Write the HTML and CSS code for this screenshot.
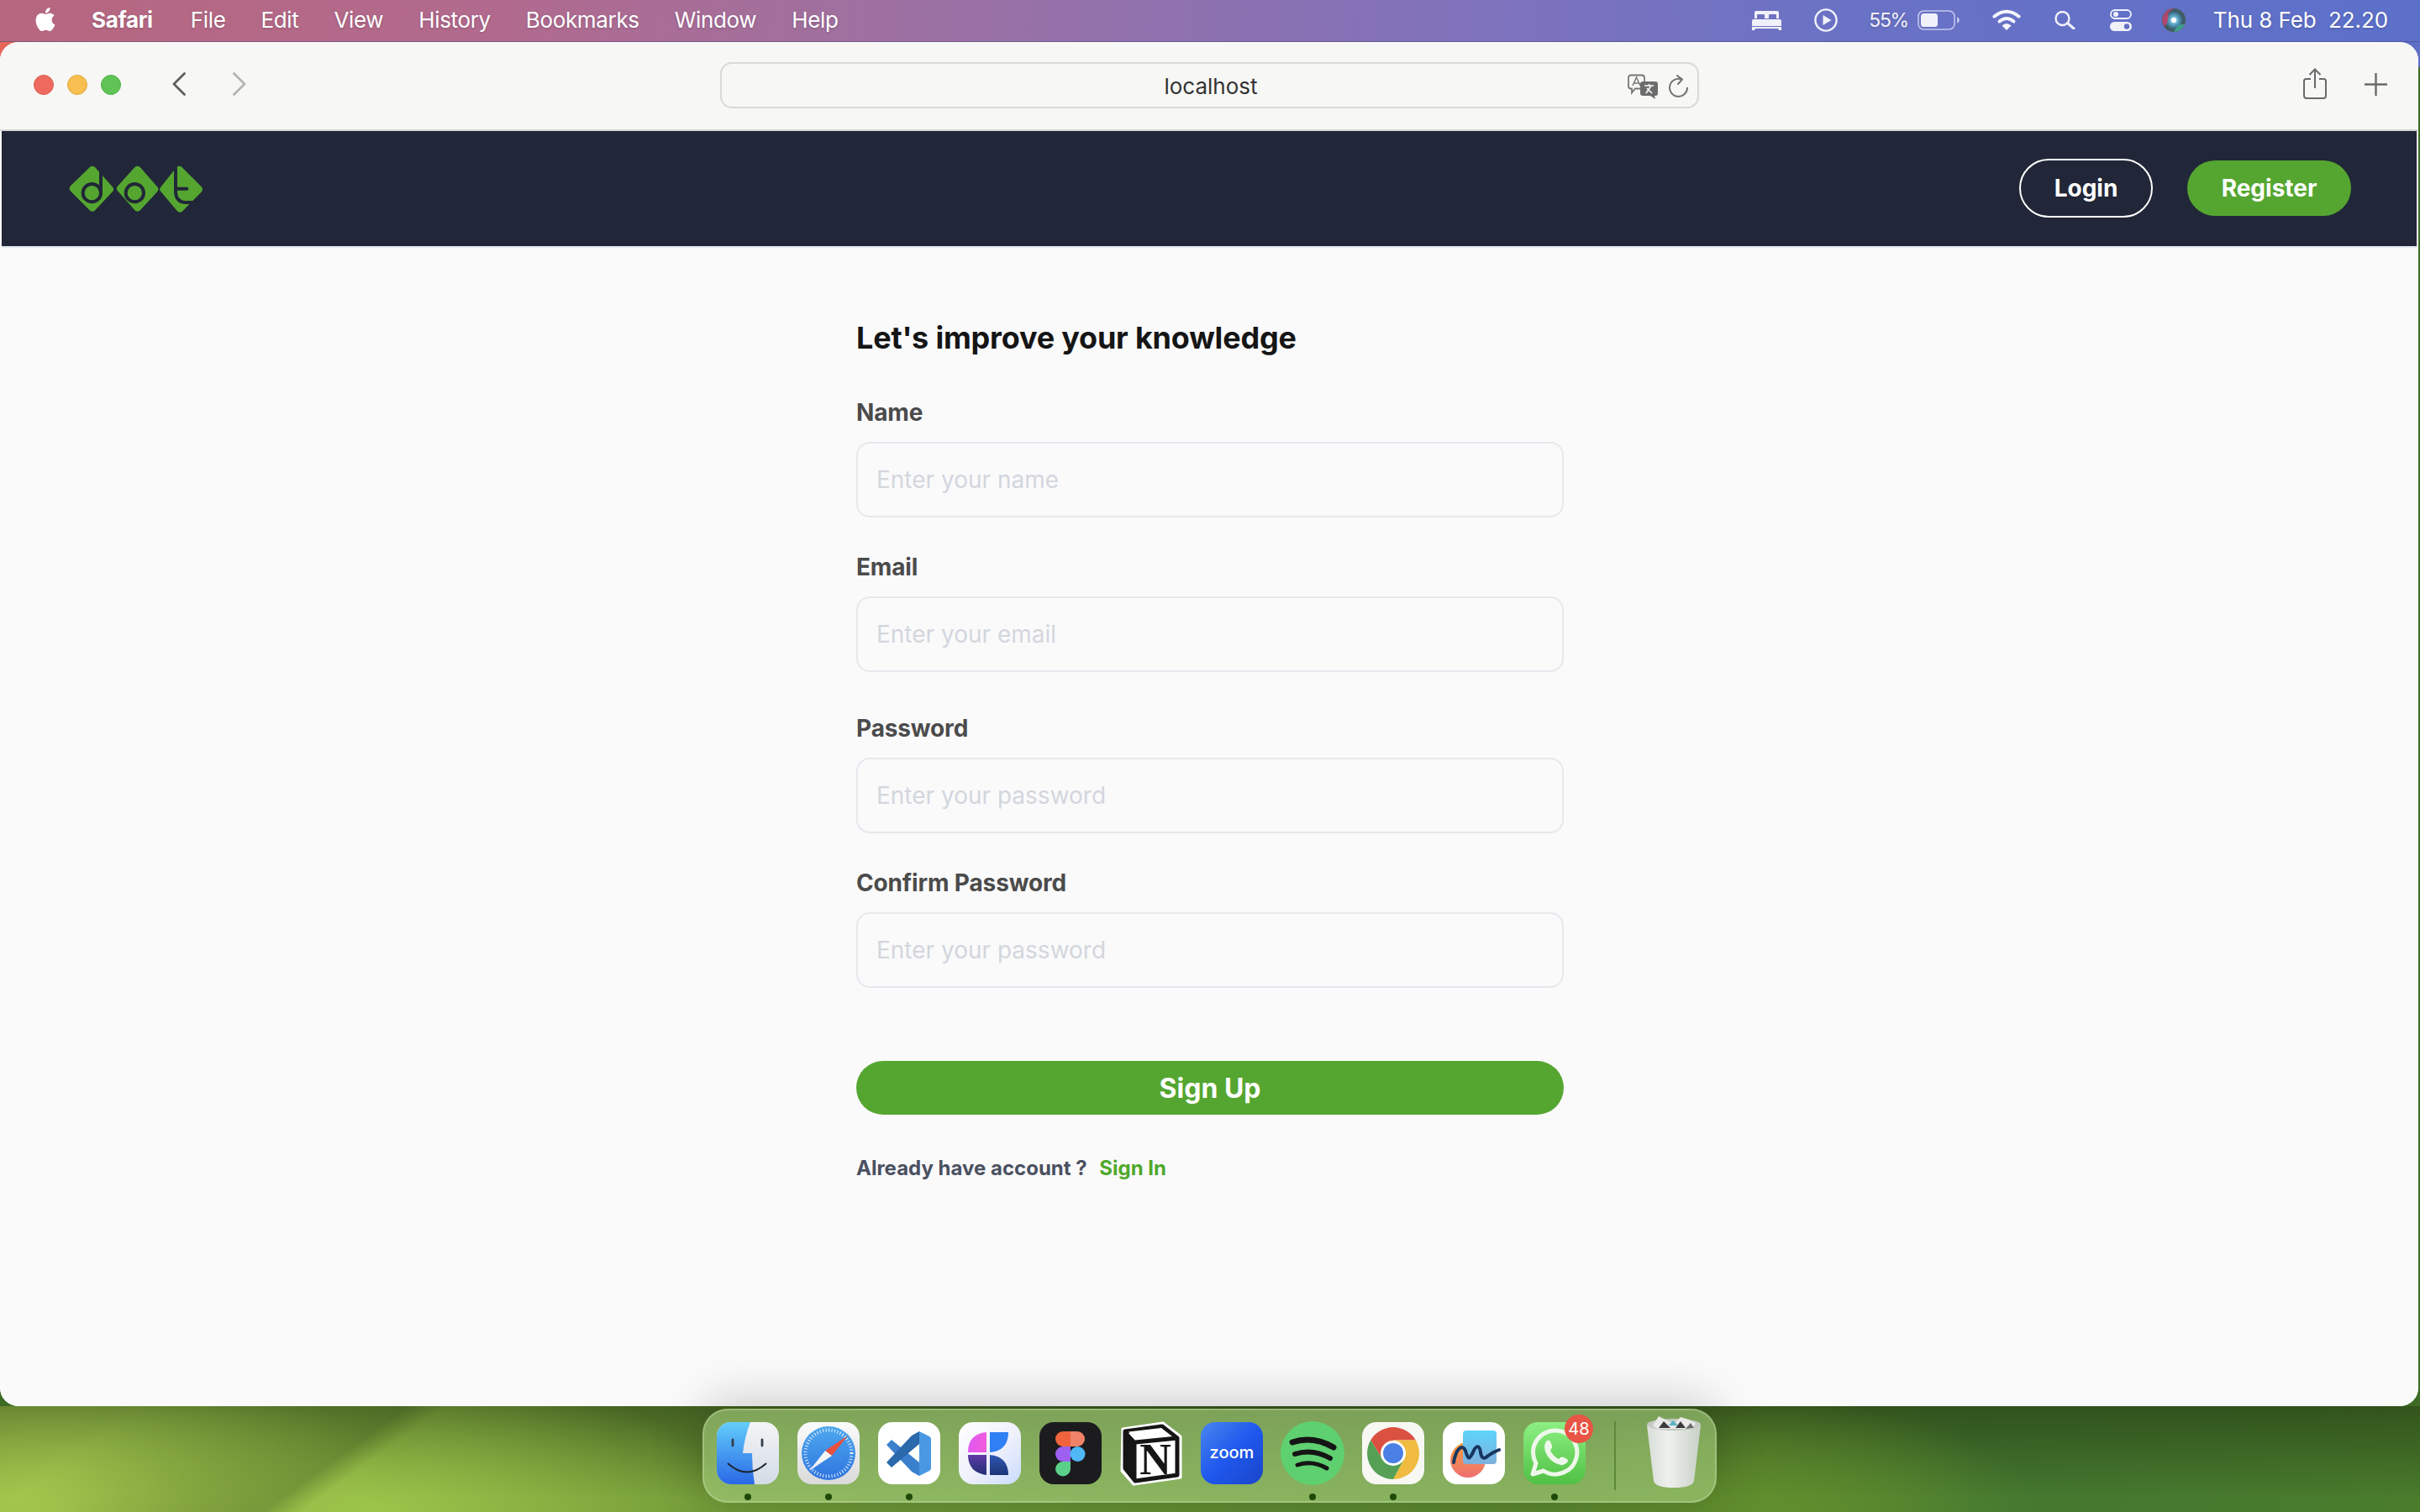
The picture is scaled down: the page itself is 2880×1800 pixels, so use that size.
FILE: index.html
```html
<!DOCTYPE html>
<html lang="en">
<head>
<meta charset="utf-8">
<title>localhost</title>
<link rel="stylesheet" href="styles.css">
</head>
<body>
<div class="desktop">
  <header class="menubar">
    <nav class="menus">
      <svg class="apple" viewBox="0 0 24 24"><path fill="#fff" d="M12.152 6.896c-.948 0-2.415-1.078-3.96-1.04-2.04.027-3.91 1.183-4.961 3.014-2.117 3.675-.546 9.103 1.519 12.09 1.013 1.454 2.208 3.09 3.792 3.039 1.52-.065 2.09-.987 3.935-.987 1.831 0 2.35.987 3.96.948 1.637-.026 2.676-1.48 3.676-2.948 1.156-1.688 1.636-3.325 1.662-3.415-.039-.013-3.182-1.221-3.22-4.857-.026-3.04 2.48-4.494 2.597-4.559-1.429-2.09-3.623-2.324-4.39-2.376-2-.156-3.675 1.09-4.61 1.09zM15.53 3.83c.843-1.012 1.4-2.427 1.245-3.83-1.207.052-2.662.805-3.532 1.818-.78.896-1.454 2.338-1.273 3.714 1.338.104 2.715-.688 3.559-1.701"/></svg>
      <span class="menu-app">Safari</span>
      <span>File</span>
      <span>Edit</span>
      <span>View</span>
      <span>History</span>
      <span>Bookmarks</span>
      <span>Window</span>
      <span>Help</span>
    </nav>
    <div class="tray">
      <svg class="tray-bed" viewBox="0 0 35 24"><path fill="#f1f1fa" d="M5 1h25q2 0 2 2v7h-3V6q0-1-1-1h-7q-1 0-1 1v4h-5V6q0-1-1-1H7Q6 5 6 6v4H3V3q0-2 2-2zM2 11h31q2 0 2 2v6H0v-6q0-2 2-2zM0 20h35v4h-3l-1-2H4l-1 2H0z"/></svg>
      <svg class="tray-play" viewBox="0 0 28 28"><circle cx="14" cy="14" r="12.6" fill="none" stroke="#f1f1fa" stroke-width="2.4"/><path fill="#f1f1fa" d="M10.5 8l10 6-10 6z"/></svg>
      <div class="tray-battery">
        <span class="battery-pct">55%</span>
        <svg class="battery" viewBox="0 0 50 24"><rect x="1" y="1" width="43" height="22" rx="6.5" fill="none" stroke="#c3c6ea" stroke-width="1.6"/><rect x="4" y="4" width="20" height="16" rx="3.5" fill="#f1f1fa"/><path fill="#c3c6ea" d="M47 8q3 1.500 3 4t-3 4z"/></svg>
      </div>
      <svg class="tray-wifi" viewBox="0 0 34 25"><g fill="none" stroke="#f6f6fc" stroke-width="4" stroke-linecap="round"><path d="M2.500 8.500Q17-3 31.500 8.500"/><path d="M8.500 14.500Q17 7.500 25.500 14.500"/></g><path fill="#f6f6fc" d="M11.500 19.500Q17 14.500 22.500 19.500L17 25z"/></svg>
      <svg class="tray-search" viewBox="0 0 25 22"><circle cx="9.500" cy="9" r="8" fill="none" stroke="#f1f1fa" stroke-width="2.400"/><path d="M15.500 14.500L23 21" stroke="#f1f1fa" stroke-width="3" stroke-linecap="round"/></svg>
      <svg class="tray-control" viewBox="0 0 26 26"><rect x="1" y="1" width="24" height="10" rx="5" fill="none" stroke="#f1f1fa" stroke-width="1.800"/><circle cx="7" cy="6" r="3" fill="#f1f1fa"/><rect y="15" width="26" height="11" rx="5.500" fill="#f1f1fa"/><circle cx="20" cy="20.500" r="3.200" fill="#6470c4"/></svg>
      <svg class="tray-siri" viewBox="0 0 28 28"><defs><radialGradient id="siriG" cx="50%" cy="50%" r="55%"><stop offset="0" stop-color="#f2f2f2"/><stop offset=".35" stop-color="#55a6c8"/><stop offset=".7" stop-color="#3c5a6c"/><stop offset="1" stop-color="#47614f"/></radialGradient></defs><circle cx="14" cy="14" r="14" fill="url(#siriG)"/><path fill="#c6426e" opacity=".85" d="M14 0A14 14 0 0 0 3 22Q9 14 7 6q3-4 7-6z"/><path fill="#3eb99a" opacity=".7" d="M14 28A14 14 0 0 0 27 19Q19 17 14 28z"/><circle cx="14" cy="14" r="3" fill="#fff"/></svg>
      <span class="clock">Thu 8 Feb&nbsp; 22.20</span>
    </div>
  </header>

  <section class="window">
    <div class="toolbar">
      <div class="lights">
        <span class="light light-red"></span>
        <span class="light light-yellow"></span>
        <span class="light light-green"></span>
      </div>
      <svg class="chevron" viewBox="0 0 16 28"><path d="M14.500 1.500L2 14l12.500 12.500" fill="none" stroke="#5e5e5e" stroke-width="2.800" stroke-linecap="round" stroke-linejoin="round"/></svg>
      <svg class="chevron chevron-next" viewBox="0 0 16 28"><path d="M1.500 1.500L14 14 1.500 26.500" fill="none" stroke="#b4b4b4" stroke-width="2.800" stroke-linecap="round" stroke-linejoin="round"/></svg>
      <div class="urlbar">
        <span class="url-text">localhost</span>
        <svg class="translate" viewBox="0 0 38 30"><path d="M5 1.500h13q3 0 3 3v10q0 3-3 3H10l-4 5v-5H5q-3 0-3-3v-10q0-3 3-3z" fill="#f7f7f5" stroke="#777" stroke-width="1.800"/><path d="M7 14L11.500 4l4.500 10M8.500 11h6" fill="none" stroke="#777" stroke-width="1.500"/><path d="M19 9h15q3 0 3 3v11q0 3-3 3h-1l1 4-6-4h-9q-3 0-3-3V12q0-3 3-3z" fill="#6c6c6c"/><path d="M21 14h11M26.500 12v2M23 23l6-9M24 17l6 6" stroke="#f7f7f5" stroke-width="1.700" fill="none"/></svg>
        <svg class="reload" viewBox="0 0 24 28"><path d="M15 5.500A10.500 10.500 0 1 0 22 15" fill="none" stroke="#737373" stroke-width="2"/><path d="M10 1l6 4.500-5 5.500" fill="none" stroke="#737373" stroke-width="2" stroke-linejoin="round" stroke-linecap="round"/></svg>
      </div>
      <div class="tool-actions">
        <svg class="share" viewBox="0 0 28 37"><path d="M9 13H3.500Q1 13 1 15.500v17Q1 36 4 36h20q3 0 3-3.500v-17Q27 13 24.500 13H19" fill="none" stroke="#6a6a6a" stroke-width="2"/><path d="M14 24V2M7.500 8L14 1.500 20.500 8" fill="none" stroke="#6a6a6a" stroke-width="2"/></svg>
        <svg class="plus" viewBox="0 0 27 27"><path d="M13.500 0v27M0 13.500h27" stroke="#6a6a6a" stroke-width="2.400"/></svg>
      </div>
    </div>

    <div class="page">
      <nav class="site-nav">
        <svg class="logo" viewBox="66 80 477 168">
          <g fill="#55a630" stroke="#55a630" stroke-width="26" stroke-linejoin="round">
            <path d="M150 95L81 162 150 231 212 165z"/>
            <path d="M311 95L250 162 311 231 372 165z"/>
            <path d="M460 95L404 165 462 234 530 165z"/>
          </g>
          <g fill="none" stroke="#212738" stroke-width="12" stroke-linecap="round">
            <circle cx="148" cy="178" r="32"/>
            <path d="M180 178V92"/>
            <circle cx="301" cy="178" r="32"/>
            <path d="M447 82V172q0 40 40 40h25M447 163h40"/>
          </g>
        </svg>
        <div class="nav-actions">
          <a class="btn-login">Login</a>
          <a class="btn-register">Register</a>
        </div>
      </nav>
      <main class="content">
        <form class="signup">
          <h1 class="title">Let's improve your knowledge</h1>
          <div class="field">
            <label class="field-label">Name</label>
            <input class="field-input" type="text" placeholder="Enter your name">
          </div>
          <div class="field">
            <label class="field-label">Email</label>
            <input class="field-input" type="text" placeholder="Enter your email">
          </div>
          <div class="field field-wide">
            <label class="field-label">Password</label>
            <input class="field-input" type="text" placeholder="Enter your password">
          </div>
          <div class="field">
            <label class="field-label">Confirm Password</label>
            <input class="field-input" type="text" placeholder="Enter your password">
          </div>
          <button class="submit" type="button">Sign Up</button>
          <p class="switch">Already have account ? <a class="switch-link">Sign In</a></p>
        </form>
      </main>
    </div>
  </section>

  <footer class="dock-row">
    <div class="dock">
      <div class="dock-item">
        <svg class="dock-icon" viewBox="0 0 74 74">
          <defs>
            <linearGradient id="finderL" x1="0" y1="0" x2="0" y2="1"><stop offset="0" stop-color="#62cdfb"/><stop offset="1" stop-color="#2a68e6"/></linearGradient>
            <linearGradient id="finderR" x1="0" y1="0" x2="0" y2="1"><stop offset="0" stop-color="#f4f5f6"/><stop offset="1" stop-color="#d3dbe7"/></linearGradient>
            <clipPath id="finderClip"><rect width="74" height="74" rx="17"/></clipPath>
          </defs>
          <g clip-path="url(#finderClip)">
            <rect width="74" height="74" fill="url(#finderR)"/>
            <path d="M0 0H40Q33 18 31 37H42Q42 56 45 74H0z" fill="url(#finderL)"/>
          </g>
          <path d="M19 21v7M54 21v7" stroke="#333c4a" stroke-width="2.800" stroke-linecap="round"/>
          <path d="M13 49Q36 70 59 49" fill="none" stroke="#1d2530" stroke-width="2"/>
        </svg>
        <span class="dock-dot"></span>
      </div>
      <div class="dock-item">
        <svg class="dock-icon" viewBox="0 0 74 74">
          <defs>
            <linearGradient id="safBg" x1="0" y1="0" x2="0" y2="1"><stop offset="0" stop-color="#fbfbfb"/><stop offset="1" stop-color="#dadada"/></linearGradient>
            <linearGradient id="safDial" x1="0" y1="0" x2="0" y2="1"><stop offset="0" stop-color="#4da8ee"/><stop offset="1" stop-color="#2f74e0"/></linearGradient>
          </defs>
          <rect width="74" height="74" rx="17" fill="url(#safBg)"/>
          <circle cx="37" cy="37" r="32" fill="url(#safDial)"/>
          <circle cx="37" cy="37" r="27.500" fill="none" stroke="#e7f2fc" stroke-width="4" stroke-dasharray="1 2.500"/>
          <path d="M60 16L41 40 33 34z" fill="#e8503f"/>
          <path d="M14 58L33 34 41 40z" fill="#f4f4f4"/>
        </svg>
        <span class="dock-dot"></span>
      </div>
      <div class="dock-item">
        <svg class="dock-icon" viewBox="0 0 74 74">
          <rect width="74" height="74" rx="17" fill="#fff"/>
          <path d="M10 27L16 21 49 48V64L40 59z" fill="#3a80cd"/>
          <path d="M10 48L40 16 49 11V26L16 54z" fill="#2a69ab"/>
          <path d="M49 11L61 17Q63 18 63 20V55Q63 57 61 58L49 64z" fill="#4a98e4"/>
        </svg>
        <span class="dock-dot"></span>
      </div>
      <div class="dock-item">
        <svg class="dock-icon" viewBox="0 0 74 74">
          <defs>
            <linearGradient id="craftBg" x1="0" y1="0" x2="1" y2="1"><stop offset="0" stop-color="#ffffff"/><stop offset=".55" stop-color="#eef0fb"/><stop offset="1" stop-color="#c9dcff"/></linearGradient>
            <linearGradient id="craftA" x1="0" y1="0" x2="1" y2="0"><stop offset="0" stop-color="#e158f2"/><stop offset="1" stop-color="#f05cdc"/></linearGradient>
            <linearGradient id="craftB" x1="0" y1="0" x2="0" y2="1"><stop offset="0" stop-color="#5f3ba6"/><stop offset="1" stop-color="#232f75"/></linearGradient>
            <linearGradient id="craftC" x1="0" y1="0" x2="0" y2="1"><stop offset="0" stop-color="#2f58b4"/><stop offset="1" stop-color="#1d3476"/></linearGradient>
          </defs>
          <rect width="74" height="74" rx="17" fill="url(#craftBg)"/>
          <path d="M33 12Q11 14 11 36H33z" fill="url(#craftA)"/>
          <path d="M37 12H59Q59 34 37 36z" fill="#2f7ff5"/>
          <path d="M11 39H33V63Q11 60 11 39z" fill="url(#craftB)"/>
          <path d="M37 39Q59 41 59 63H37z" fill="url(#craftC)"/>
        </svg>
      </div>
      <div class="dock-item">
        <svg class="dock-icon" viewBox="0 0 74 74">
          <rect width="74" height="74" rx="17" fill="#1c1c1f"/>
          <path d="M19 20A9 9 0 0 1 28 11H37V29H28A9 9 0 0 1 19 20z" fill="#f0633d"/>
          <path d="M37 11H45A9 9 0 0 1 45 29H37z" fill="#f0826a"/>
          <path d="M19 38A9 9 0 0 1 28 29H37V47H28A9 9 0 0 1 19 38z" fill="#9d5ff0"/>
          <circle cx="45.500" cy="38" r="9" fill="#4fb8f5"/>
          <path d="M19 55.500A9 9 0 0 1 28 47H37V55.500A9 9 0 0 1 19 55.500z" fill="#5ad08a"/>
        </svg>
      </div>
      <div class="dock-item">
        <svg class="dock-icon" viewBox="0 0 74 74">
          <path d="M3 8L51 1 72 17V66L16 74 2 58z" fill="#fff" stroke="#fff" stroke-width="3" stroke-linejoin="round"/>
          <path d="M6 11L50 5 68 19V63L18 70 6 55z" fill="#fff" stroke="#151515" stroke-width="5" stroke-linejoin="round"/>
          <path d="M6 11L18 24V70L6 55z" fill="#151515" stroke="#151515" stroke-width="3" stroke-linejoin="round"/>
          <path d="M10 11.500L49 7 62 17 21 21z" fill="#fff"/>
          <path d="M18 24L68 19" stroke="#151515" stroke-width="5"/>
          <text class="notion-n" x="42" y="62" text-anchor="middle">N</text>
        </svg>
      </div>
      <div class="dock-item">
        <svg class="dock-icon" viewBox="0 0 74 74">
          <defs><linearGradient id="zoomBg" x1="0" y1="0" x2="1" y2="1"><stop offset="0" stop-color="#4a86ef"/><stop offset=".5" stop-color="#1f58ee"/><stop offset="1" stop-color="#1a45c9"/></linearGradient></defs>
          <rect width="74" height="74" rx="17" fill="url(#zoomBg)"/>
          <text class="zoom-word" x="37" y="43" text-anchor="middle">zoom</text>
        </svg>
      </div>
      <div class="dock-item">
        <svg class="dock-icon dock-icon-spotify" viewBox="0 0 76 76">
          <circle cx="38" cy="38" r="38" fill="#5fd070"/>
          <g fill="none" stroke="#151515" stroke-linecap="round">
            <path d="M14 25Q38 17 63 31" stroke-width="7"/>
            <path d="M17 39Q38 32 59 44" stroke-width="6"/>
            <path d="M20 52Q38 46 55 56" stroke-width="5"/>
          </g>
        </svg>
        <span class="dock-dot"></span>
      </div>
      <div class="dock-item">
        <svg class="dock-icon" viewBox="0 0 74 74">
          <rect width="74" height="74" rx="17" fill="#f8f8f3"/>
          <path d="M10.200 21.500A31 31 0 0 1 63.800 21.500H37L24 44z" fill="#db5141"/>
          <path d="M63.800 21.500A31 31 0 0 1 37 68L50 44 37 21.500z" fill="#f0bb40"/>
          <path d="M37 68A31 31 0 0 1 10.200 21.500L24 44H50z" fill="#55a055"/>
          <circle cx="37" cy="37" r="15" fill="#fff"/>
          <circle cx="37" cy="37" r="12" fill="#4a7fe5"/>
        </svg>
        <span class="dock-dot"></span>
      </div>
      <div class="dock-item">
        <svg class="dock-icon" viewBox="0 0 74 74">
          <defs>
            <linearGradient id="ffBlue" x1="0" y1="0" x2="0" y2="1"><stop offset="0" stop-color="#5cd4fb"/><stop offset="1" stop-color="#7fb0dc"/></linearGradient>
            <linearGradient id="ffRed" x1="0" y1="0" x2="0" y2="1"><stop offset="0" stop-color="#f5a03f"/><stop offset="1" stop-color="#ef6f70"/></linearGradient>
          </defs>
          <rect width="74" height="74" rx="17" fill="#fff"/>
          <circle cx="30" cy="45" r="21" fill="url(#ffRed)"/>
          <rect x="24" y="10" width="40" height="40" rx="4" fill="url(#ffBlue)"/>
          <path d="M13 48C16 30 24 26 27 34C30 44 31 46 36 36C40 26 44 28 45 36C46 44 50 44 54 40C58 37 62 35 67 33" fill="none" stroke="#17365f" stroke-width="4" stroke-linecap="round"/>
        </svg>
      </div>
      <div class="dock-item dock-item-badged">
        <svg class="dock-icon" viewBox="0 0 74 74">
          <defs><linearGradient id="waBg" x1="0" y1="0" x2="0" y2="1"><stop offset="0" stop-color="#8cf082"/><stop offset="1" stop-color="#50c044"/></linearGradient></defs>
          <rect width="74" height="74" rx="17" fill="url(#waBg)"/>
          <path d="M37 10A26 26 0 1 1 24 58L11 62 15 49A26 26 0 0 1 37 10z" fill="none" stroke="#eef8ea" stroke-width="5" stroke-linejoin="round"/>
          <path d="M27 23Q30 20 32 23L34 28Q35 30 33 32L32 34Q36 41 42 44L44 42Q46 41 48 42L52 44Q54 46 52 48Q48 53 41 50Q30 46 26 35Q24 28 27 23z" fill="#eef8ea"/>
        </svg>
        <span class="dock-dot"></span>
        <span class="dock-badge">48</span>
      </div>
      <span class="dock-sep"></span>
      <div class="dock-item dock-item-trash">
        <svg class="dock-trash" viewBox="0 0 64 86">
          <defs><linearGradient id="trashG" x1="0" y1="0" x2="1" y2="0"><stop offset="0" stop-color="#d8ded8"/><stop offset=".4" stop-color="#eef0ee"/><stop offset="1" stop-color="#c8d0c6"/></linearGradient></defs>
          <path d="M0 12Q32 20 64 12L56 78Q54 86 32 86 10 86 8 78z" fill="url(#trashG)"/>
          <ellipse cx="32" cy="11" rx="32" ry="7" fill="#c5cbc4"/>
          <path d="M7 12L14 1 24 6 32 10 40 2 50 5 58 9 54 16H12z" fill="#e9e9e9"/>
          <path d="M14 15L20 7 28 15zM34 15L40 7 46 15z" fill="#3b3b3b"/>
          <path d="M26 12L31 6 37 12z" fill="#58b4c4"/>
          <path d="M46 16L52 9 56 15z" fill="#6b6b6b"/>
        </svg>
      </div>
    </div>
  </footer>
</div>
</body>
</html>
```
FILE: styles.css
```css
* { box-sizing: border-box; }
html, body { margin: 0; padding: 0; }
body {
  width: 2880px;
  height: 1800px;
  overflow: hidden;
  font-family: Inter, "Liberation Sans", sans-serif;
  background: #3d6a24;
}
.desktop {
  display: grid;
  grid-template-rows: 50px 1624px 126px;
  width: 2880px;
  height: 1800px;
  background:
    linear-gradient(90deg, #e5655a 0, #e5655a 30px, #5f6fc8 2840px, #5f6fc8 100%) top / 100% 80px no-repeat,
    #3d6a24;
}
.menubar {
  display: flex;
  align-items: center;
  justify-content: space-between;
  padding: 0 38px 2px 40px;
  color: #fff;
  font-size: 26px;
  font-weight: 400;
  letter-spacing: -.35px;
  background: linear-gradient(90deg, #b7677f 0, #b16a8e 600px, #a0709f 1000px, #7d72bd 1800px, #6a72c5 2200px, #5c70ca 2880px);
  border-bottom: 1px solid rgba(60, 60, 110, .45);
  text-shadow: 0 1px 3px rgba(0, 0, 0, .2);
}
.menus { display: flex; align-items: center; gap: 42px; }
.apple { width: 28px; height: 32px; margin-right: -1px; margin-top: -2px; }
.menu-app { margin-right: 3px; font-weight: 700; }
.tray { display: flex; align-items: center; gap: 38px; }
.tray-bed { width: 35px; height: 24px; }
.tray-play { width: 28px; height: 28px; margin-left: 1px; }
.tray-battery { display: flex; align-items: center; gap: 11px; margin-left: -1px; color: #f1f1fa; }
.battery-pct { font-size: 23px; letter-spacing: -1.300px; }
.battery { width: 50px; height: 24px; }
.tray-wifi { width: 34px; height: 25px; margin-left: 1px; }
.tray-search { width: 25px; height: 22px; margin-left: 2px; }
.tray-control { width: 26px; height: 26px; margin-left: 3px; }
.tray-siri { width: 28px; height: 28px; margin-left: -2px; margin-right: -5px; }
.clock { font-size: 26px; letter-spacing: -.1px; white-space: nowrap; }

.window {
  display: flex;
  flex-direction: column;
  width: 2878px;
  overflow: hidden;
  border-radius: 22px;
  background: #fafafb;
}
.toolbar {
  display: flex;
  align-items: center;
  flex: none;
  height: 106px;
  padding: 0 37px 2px 40px;
  background: #f7f7f5;
  border-bottom: 2px solid #d6d6d6;
}
.lights { display: flex; gap: 16px; }
.light { width: 24px; height: 24px; border-radius: 50%; }
.light-red { background: #ee6a5f; border: 1px solid #dc5a50; }
.light-yellow { background: #f6bf4f; border: 1px solid #e2a93f; }
.light-green { background: #5fc455; border: 1px solid #52b048; }
.chevron { width: 16px; height: 28px; margin-left: 61px; margin-top: -2px; flex: none; }
.chevron-next { margin-left: 56px; }
.urlbar {
  position: relative;
  display: flex;
  align-items: center;
  justify-content: center;
  width: 1165px;
  height: 55px;
  margin-left: 564px;
  padding: 2px 0 0 3px;
  background: #f7f7f5;
  border: 2px solid #d9d9d7;
  border-radius: 14px;
  color: #333;
  font-size: 26px;
}
.translate { position: absolute; right: 46px; top: 12px; width: 38px; height: 30px; }
.reload { position: absolute; right: 10px; top: 13px; width: 24px; height: 28px; }
.tool-actions { display: flex; align-items: center; gap: 45px; margin-left: auto; }
.share { width: 28px; height: 37px; margin-top: -4px; }
.plus { width: 27px; height: 27px; margin-top: -2px; }

.page { display: flex; flex-direction: column; flex: 1; min-height: 0; padding: 0 2px; background: #fafafb; }
.site-nav {
  display: flex;
  align-items: center;
  justify-content: space-between;
  flex: none;
  height: 139px;
  padding: 0 78px 2px 80px;
  background: #212738;
  border-bottom: 2px solid #e4e8ee;
}
.logo { width: 159px; height: 56px; margin-top: 3px; }
.nav-actions { display: flex; align-items: center; gap: 41px; }
.btn-login, .btn-register {
  display: flex;
  align-items: center;
  justify-content: center;
  font-size: 28px;
  font-weight: 700;
  color: #fff;
  border-radius: 36px;
}
.btn-login { width: 159px; height: 70px; border: 2px solid #fff; }
.btn-register { width: 195px; height: 66px; background: #55a630; }

.content { flex: 1; padding: 85px 0 0 2px; }
.signup { display: flex; flex-direction: column; width: 842px; margin: 0 auto; }
.title { margin: 0 0 49px; font-size: 36px; line-height: 44px; font-weight: 700; letter-spacing: -.2px; color: #151515; }
.field { display: flex; flex-direction: column; margin-bottom: 41px; }
.field-wide { margin-top: 8px; }
.field-label { margin-bottom: 17px; font-size: 28px; line-height: 36px; font-weight: 700; letter-spacing: -.15px; color: #4b4b4b; }
.field-input {
  width: 100%;
  height: 90px;
  padding: 0 22px;
  background: #fafafb;
  border: 2px solid #e7e8ed;
  border-radius: 16px;
  font-family: inherit;
  font-size: 28px;
  outline: none;
}
.field-input::placeholder { color: #d3d6dd; opacity: 1; }
.submit {
  height: 64px;
  margin-top: 46px;
  background: #55a630;
  border: 0;
  border-radius: 32px;
  color: #fff;
  font-family: inherit;
  font-size: 32px;
  font-weight: 700;
}
.switch { margin: 47px 0 0; font-size: 24px; line-height: 34px; font-weight: 700; color: #4a5060; }
.switch-link { margin-left: 9px; color: #4fa82c; }

.dock-row {
  position: relative;
  z-index: 2;
  display: flex;
  justify-content: flex-start;
  padding: 3px 0 0 836px;
  background:
    linear-gradient(144deg, rgba(30, 50, 15, 0) 100px, rgba(30, 50, 15, .28) 285px, rgba(30, 50, 15, 0) 312px),
    radial-gradient(420px 200px at 60px 126px, rgba(170, 205, 80, .95), rgba(170, 205, 80, 0)),
    radial-gradient(420px 180px at 450px 126px, rgba(160, 200, 75, .9), rgba(160, 200, 75, 0)),
    radial-gradient(320px 130px at 2110px 126px, rgba(100, 145, 45, .85), rgba(100, 145, 45, 0)),
    linear-gradient(180deg, rgba(30, 50, 15, .55), rgba(30, 50, 15, 0) 110px),
    linear-gradient(90deg, #7a9e3c 0, #729a38 820px, #5d8a30 1500px, #55822d 2100px, #447830 2350px, #4a7c2c 2880px);
}
.dock {
  display: flex;
  align-items: flex-start;
  gap: 22px;
  width: 1207px;
  height: 112px;
  padding: 14px 0 0 15px;
  background: rgba(165, 205, 125, .62);
  border: 2px solid rgba(205, 230, 180, .35);
  border-radius: 30px;
  box-shadow: 0 -8px 60px rgba(0, 0, 0, .2);
}
.dock-item { position: relative; display: flex; flex-direction: column; align-items: center; width: 74px; flex: none; }
.dock-icon { display: block; width: 74px; height: 74px; overflow: visible; flex: none; }
.dock-icon-spotify { width: 76px; height: 76px; margin: -1px -1px -1px; }
.dock-dot { width: 8px; height: 8px; margin-top: 11px; border-radius: 50%; background: #1d4a06; }
.dock-badge {
  position: absolute;
  left: 49px;
  top: -9px;
  display: flex;
  align-items: center;
  justify-content: center;
  width: 34px;
  height: 34px;
  border-radius: 50%;
  background: #e85545;
  color: #fff;
  font-size: 20px;
}
.dock-sep { flex: none; width: 2px; height: 82px; margin: -1px 15px 0 12px; background: #5d8a38; }
.dock-item-trash { width: 64px; }
.dock-trash { display: block; width: 64px; height: 86px; margin-top: -8px; }
.notion-n { font-family: "Liberation Serif", serif; font-weight: 700; font-size: 52px; fill: #151515; }
.zoom-word { font-family: Inter, sans-serif; font-weight: 500; font-size: 20px; fill: #fff; }
```
